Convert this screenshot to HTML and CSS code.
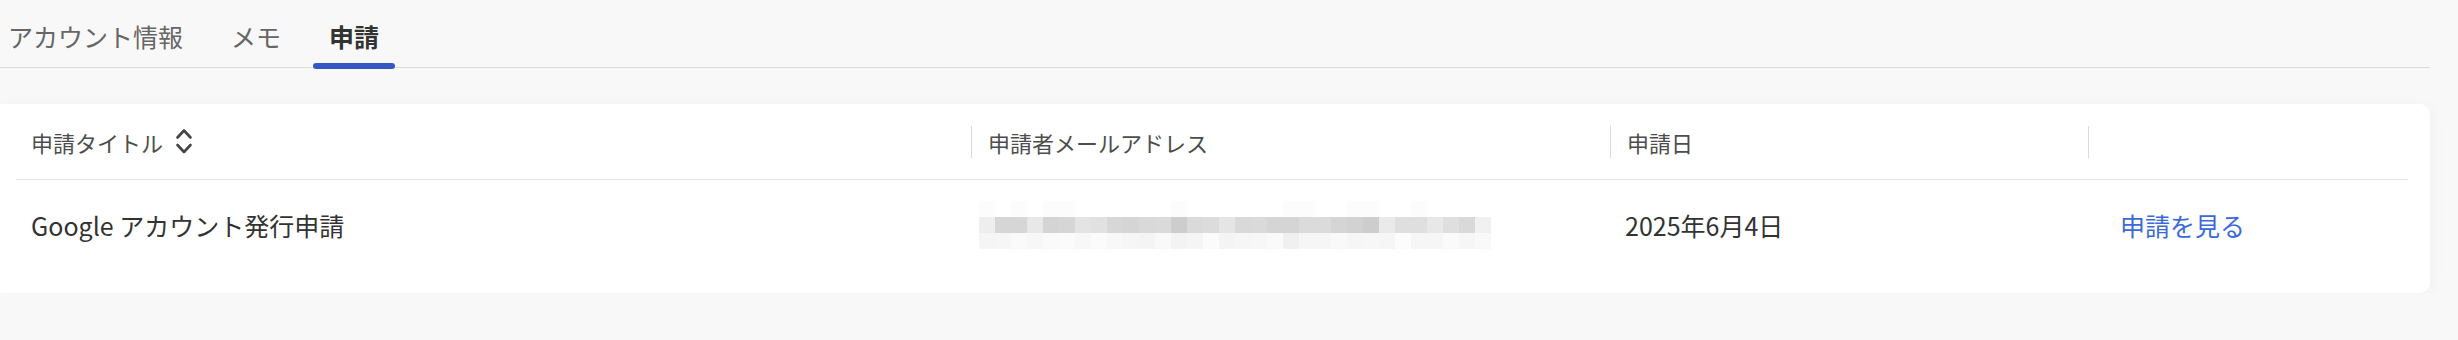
FILE: index.html
```html
<!DOCTYPE html>
<html lang="ja">
<head>
<meta charset="utf-8">
<title>申請</title>
<link rel="stylesheet" href="styles.css">
</head>
<body>
<div class="page">
  <nav class="tabs">
    <div class="tab">アカウント情報</div>
    <div class="tab">メモ</div>
    <div class="tab active">申請</div>
  </nav>

  <section class="card">
    <div class="table">
      <div class="row head">
        <div class="th first">
          <span class="th-label">申請タイトル</span>
          <svg class="sort" width="18" height="28" viewBox="0 0 18 28" aria-hidden="true">
            <path d="M2.5 10.5 L9 3.5 L15.5 10.5" />
            <path d="M2.5 18 L9 25 L15.5 18" />
          </svg>
        </div>
        <div class="th"><span class="th-inner">申請者メールアドレス</span></div>
        <div class="th"><span class="th-inner">申請日</span></div>
        <div class="th"><span class="th-inner"></span></div>
      </div>
      <div class="row body">
        <div class="td">Google アカウント発行申請</div>
        <div class="td email">
          <svg class="blur" width="512" height="48" viewBox="0 0 512 48" aria-label="(非表示)">
            <g class="top">
              <rect x="0" y="0" width="16" height="16" fill="#fcfcfc"/>
              <rect x="32" y="0" width="16" height="16" fill="#fcfcfc"/>
              <rect x="64" y="0" width="32" height="16" fill="#fcfcfc"/>
              <rect x="192" y="0" width="16" height="16" fill="#fcfcfc"/>
              <rect x="304" y="0" width="32" height="16" fill="#fcfcfc"/>
              <rect x="368" y="0" width="32" height="16" fill="#fcfcfc"/>
              <rect x="432" y="0" width="16" height="16" fill="#fcfcfc"/>
            </g>
            <g class="mid">
              <rect x="0" y="16" width="16" height="16" fill="#eeeeee"/>
              <rect x="16" y="16" width="16" height="16" fill="#d6d6d6"/>
              <rect x="32" y="16" width="16" height="16" fill="#d6d6d6"/>
              <rect x="48" y="16" width="16" height="16" fill="#e8e8e8"/>
              <rect x="64" y="16" width="16" height="16" fill="#d4d4d4"/>
              <rect x="80" y="16" width="16" height="16" fill="#d6d6d6"/>
              <rect x="96" y="16" width="16" height="16" fill="#e4e4e4"/>
              <rect x="112" y="16" width="16" height="16" fill="#e1e1e1"/>
              <rect x="128" y="16" width="16" height="16" fill="#d7d7d7"/>
              <rect x="144" y="16" width="16" height="16" fill="#d5d5d5"/>
              <rect x="160" y="16" width="16" height="16" fill="#d9d9d9"/>
              <rect x="176" y="16" width="16" height="16" fill="#dadada"/>
              <rect x="192" y="16" width="16" height="16" fill="#cdcdcd"/>
              <rect x="208" y="16" width="16" height="16" fill="#dadada"/>
              <rect x="224" y="16" width="16" height="16" fill="#dcdcdc"/>
              <rect x="240" y="16" width="16" height="16" fill="#e5e5e5"/>
              <rect x="256" y="16" width="16" height="16" fill="#d9d9d9"/>
              <rect x="272" y="16" width="16" height="16" fill="#dadada"/>
              <rect x="288" y="16" width="16" height="16" fill="#d5d5d5"/>
              <rect x="304" y="16" width="16" height="16" fill="#d5d5d5"/>
              <rect x="320" y="16" width="16" height="16" fill="#dbdbdb"/>
              <rect x="336" y="16" width="16" height="16" fill="#dbdbdb"/>
              <rect x="352" y="16" width="16" height="16" fill="#d5d5d5"/>
              <rect x="368" y="16" width="16" height="16" fill="#d2d2d2"/>
              <rect x="384" y="16" width="16" height="16" fill="#cdcdcd"/>
              <rect x="400" y="16" width="16" height="16" fill="#eaeaea"/>
              <rect x="416" y="16" width="16" height="16" fill="#dfdfdf"/>
              <rect x="432" y="16" width="16" height="16" fill="#dfdfdf"/>
              <rect x="448" y="16" width="16" height="16" fill="#e8e8e8"/>
              <rect x="464" y="16" width="16" height="16" fill="#dfdfdf"/>
              <rect x="480" y="16" width="16" height="16" fill="#d9d9d9"/>
              <rect x="496" y="16" width="16" height="16" fill="#f1f1f1"/>
            </g>
            <g class="bot">
              <rect x="0" y="32" width="16" height="16" fill="#f5f5f5"/>
              <rect x="16" y="32" width="16" height="16" fill="#f6f6f6"/>
              <rect x="32" y="32" width="16" height="16" fill="#fafafa"/>
              <rect x="48" y="32" width="16" height="16" fill="#f7f7f7"/>
              <rect x="64" y="32" width="16" height="16" fill="#fafafa"/>
              <rect x="80" y="32" width="16" height="16" fill="#fbfbfb"/>
              <rect x="96" y="32" width="16" height="16" fill="#f8f8f8"/>
              <rect x="112" y="32" width="16" height="16" fill="#fbfbfb"/>
              <rect x="128" y="32" width="16" height="16" fill="#f8f8f8"/>
              <rect x="144" y="32" width="16" height="16" fill="#f6f6f6"/>
              <rect x="160" y="32" width="16" height="16" fill="#f4f4f4"/>
              <rect x="176" y="32" width="16" height="16" fill="#f9f9f9"/>
              <rect x="192" y="32" width="16" height="16" fill="#f3f3f3"/>
              <rect x="208" y="32" width="16" height="16" fill="#f5f5f5"/>
              <rect x="224" y="32" width="16" height="16" fill="#fbfbfb"/>
              <rect x="240" y="32" width="16" height="16" fill="#f4f4f4"/>
              <rect x="256" y="32" width="16" height="16" fill="#f6f6f6"/>
              <rect x="272" y="32" width="16" height="16" fill="#f7f7f7"/>
              <rect x="288" y="32" width="16" height="16" fill="#fafafa"/>
              <rect x="304" y="32" width="16" height="16" fill="#f0f0f0"/>
              <rect x="320" y="32" width="16" height="16" fill="#f6f6f6"/>
              <rect x="336" y="32" width="16" height="16" fill="#f6f6f6"/>
              <rect x="352" y="32" width="16" height="16" fill="#f9f9f9"/>
              <rect x="368" y="32" width="16" height="16" fill="#f6f6f6"/>
              <rect x="384" y="32" width="16" height="16" fill="#f7f7f7"/>
              <rect x="400" y="32" width="16" height="16" fill="#f6f6f6"/>
              <rect x="416" y="32" width="16" height="16" fill="#fcfcfc"/>
              <rect x="432" y="32" width="16" height="16" fill="#f6f6f6"/>
              <rect x="448" y="32" width="16" height="16" fill="#f6f6f6"/>
              <rect x="464" y="32" width="16" height="16" fill="#fafafa"/>
              <rect x="480" y="32" width="16" height="16" fill="#f6f6f6"/>
              <rect x="496" y="32" width="16" height="16" fill="#f9f9f9"/>
            </g>
          </svg>
        </div>
        <div class="td">2025年6月4日</div>
        <div class="td action"><a class="link" href="#">申請を見る</a></div>
      </div>
    </div>
  </section>
</div>
</body>
</html>
```

FILE: styles.css
```css
* {
  box-sizing: border-box;
}

html, body {
  margin: 0;
  padding: 0;
}

body {
  background: #f8f8f8;
  font-family: "Noto Sans CJK JP", "Noto Sans", sans-serif;
  color: #333333;
  overflow: hidden;
}

.page {
  padding-right: 28px;
}

/* Tabs */
.tabs {
  display: flex;
  gap: 16px;
  padding-left: 8px;
  border-bottom: 1px solid #dcdcdc;
}

.tab {
  position: relative;
  padding: 18px 16px 13px;
  font-size: 25px;
  line-height: 36px;
  color: #666666;
  white-space: nowrap;
}

.tab:first-child {
  padding-left: 0;
}

.tab.active {
  color: #333333;
  font-weight: 700;
}

.tab.active::after {
  content: "";
  position: absolute;
  left: 0;
  right: 0;
  bottom: -2px;
  height: 6px;
  border-radius: 3px;
  background: #3457c4;
}

/* Card */
.card {
  margin-top: 36px;
  margin-left: -6px;
  background: #ffffff;
  border-radius: 10px;
  padding: 0 22px 23px;
  box-shadow: 0 4px 18px rgba(0, 0, 0, 0.045);
}

.row {
  display: grid;
  grid-template-columns: 955px 639px 478px 1fr;
}

.row.head {
  height: 76px;
  border-bottom: 1px solid #e5e5e5;
}

.row.body {
  height: 90px;
}

.th {
  display: flex;
  align-items: center;
  font-size: 22px;
  color: #4d4d4d;
  white-space: nowrap;
}

.th.first {
  padding-left: 15px;
  gap: 12px;
}

.th-inner {
  display: flex;
  align-items: center;
  height: 32px;
  width: 100%;
  border-left: 1px solid #dadada;
  padding-left: 16px;
}

.sort {
  display: block;
  margin-top: -2px;
}

.sort path {
  fill: none;
  stroke: #444444;
  stroke-width: 2.6;
  stroke-linecap: round;
  stroke-linejoin: round;
}

.td {
  display: flex;
  align-items: center;
  padding-left: 15px;
  font-size: 25px;
  color: #333333;
  white-space: nowrap;
}

.td.email {
  padding-left: 8px;
}

.blur {
  display: block;
}

.td.action {
  padding-left: 16px;
}

.link {
  padding: 0 16px;
  color: #3a6ad9;
  text-decoration: none;
}
```
